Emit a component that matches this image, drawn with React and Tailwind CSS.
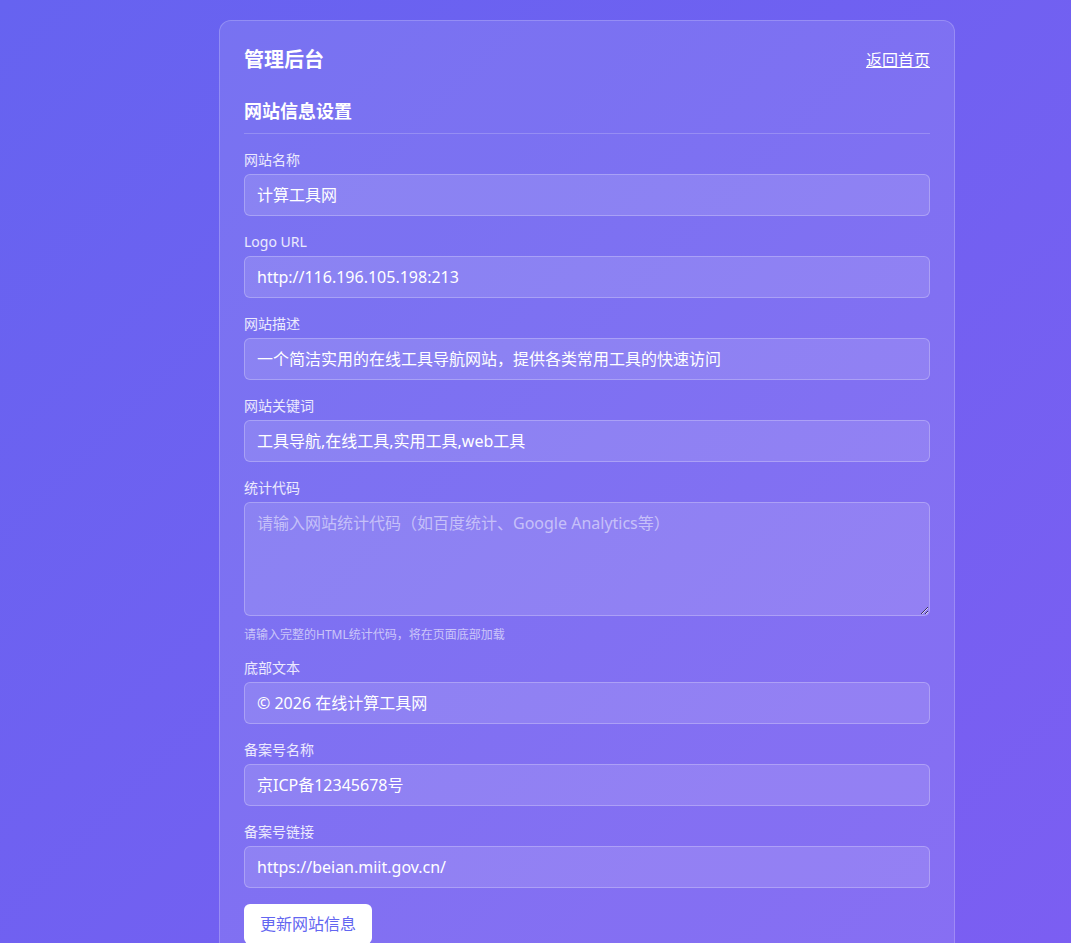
import React from 'react';

const fields = [
  { label: '网站名称', value: '计算工具网' },
  { label: 'Logo URL', value: 'http://116.196.105.198:213' },
  { label: '网站描述', value: '一个简洁实用的在线工具导航网站，提供各类常用工具的快速访问' },
  { label: '网站关键词', value: '工具导航,在线工具,实用工具,web工具' },
];

const footerFields = [
  { label: '底部文本', value: '© 2026 在线计算工具网' },
  { label: '备案号名称', value: '京ICP备12345678号' },
  { label: '备案号链接', value: 'https://beian.miit.gov.cn/' },
];

const inputCls =
  'block w-full rounded-md border border-white/25 bg-white/[0.12] px-3 py-2 text-base leading-6 text-white outline-none placeholder:text-white/50';

const Field = ({ label, value }) => (
  <div className="mb-4">
    <label className="mb-1 block text-sm leading-5 text-white/85">{label}</label>
    <input className={inputCls} defaultValue={value} />
  </div>
);

export default function App() {
  return (
    <div
      className="min-h-screen bg-[linear-gradient(135deg,#6663f0_0%,#7c5ef2_100%)] pt-5 pb-10"
      style={{ fontFamily: '"Noto Sans", "Noto Sans CJK SC", sans-serif' }}
    >
      <div className="ml-[219px] w-[736px] rounded-xl border border-white/20 bg-white/10 p-6 text-white">
        <div className="mb-[22px] flex items-center justify-between">
          <h1 className="text-xl leading-[30px] font-bold">管理后台</h1>
          <a href="#" className="text-base underline">返回首页</a>
        </div>

        <h2 className="mb-4 border-b border-white/20 pb-2 text-lg font-bold">网站信息设置</h2>

        {fields.map((f) => (
          <Field key={f.label} {...f} />
        ))}

        <div className="mb-[14px]">
          <label className="mb-1 block text-sm leading-5 text-white/85">统计代码</label>
          <textarea
            className={`${inputCls} h-[114px]`}
            placeholder="请输入网站统计代码（如百度统计、Google Analytics等）"
          />
          <p className="mt-[10px] text-xs leading-[18px] text-white/60">请输入完整的HTML统计代码，将在页面底部加载</p>
        </div>

        {footerFields.map((f) => (
          <Field key={f.label} {...f} />
        ))}

        <button className="rounded-md bg-white px-4 py-2 text-base leading-6 text-[#6366f1]">更新网站信息</button>
      </div>
    </div>
  );
}
